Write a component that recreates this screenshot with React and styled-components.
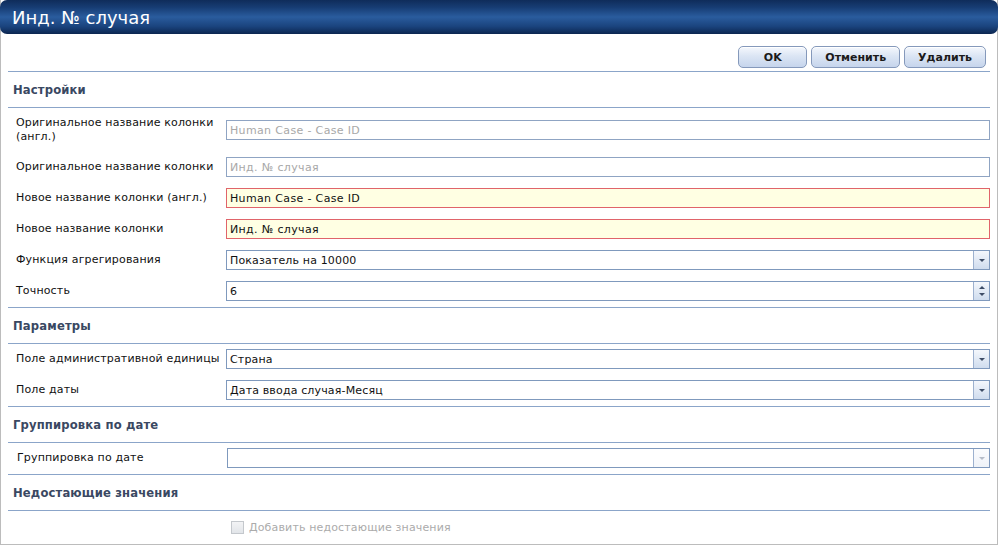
import React from "react"
import styled, { createGlobalStyle } from "styled-components"

const Global = createGlobalStyle`
  html, body {
    margin: 0;
    padding: 0;
    background: #fff;
  }
  body {
    font-family: "DejaVu Sans", Verdana, sans-serif;
    font-size: 11px;
    letter-spacing: 0.15px;
    color: #000;
  }
`

const Window = styled.div`
  width: 996px;
  height: 544px;
  border: 1px solid #bcbcbc;
  border-top: none;
  display: flex;
  flex-direction: column;
`
const TitleBar = styled.div`
  height: 34px;
  margin: 0 -1px;
  border-radius: 7px;
  background: linear-gradient(
    #0f2c5a 0%,
    #173d74 22%,
    #2a5c9e 50%,
    #1a437d 78%,
    #0c2650 100%
  );
  display: flex;
  align-items: center;
  padding-left: 12px;
  color: #fff;
  font-size: 18px;
  letter-spacing: 0;
`
const Body = styled.div`
  padding: 0 7px;
  display: flex;
  flex-direction: column;
`
const Toolbar = styled.div`
  display: flex;
  justify-content: flex-end;
  gap: 4px;
  padding: 12px 4px 3px 0;
`
const Button = styled.button`
  height: 22px;
  min-width: 69px;
  padding: 0 13px;
  border: 1px solid #8599bb;
  border-radius: 5px;
  background: linear-gradient(#f5f8fd 0%, #dbe5f4 45%, #c6d5ec 100%);
  box-shadow: inset 0 1px 0 #fff;
  font-family: "DejaVu Sans", Verdana, sans-serif;
  font-size: 11px;
  font-weight: bold;
  color: #1b1b1b;
`
const Line = styled.div`
  height: 1px;
  background: #8ba5c9;
`
const SectionTitle = styled.div`
  height: 35px;
  display: flex;
  align-items: center;
  padding-left: 5px;
  font-size: 11.6px;
  font-weight: bold;
  color: #3a4862;
`
const Rows = styled.div`
  display: flex;
  flex-direction: column;
  gap: 11px;
  padding: 5px 0 6px 0;
`
const Row = styled.div`
  display: flex;
  align-items: center;
  padding: ${(p) => (p.$tall ? "3px 0 2px" : "0")};
`
const Label = styled.div`
  width: 210px;
  padding-left: ${(p) => (p.$indent ? "9px" : "8px")};
  line-height: 14px;
  color: #111;
`
const Field = styled.div`
  flex: 1;
  height: 18px;
  border: 1px solid ${(p) => (p.$error ? "#e0646a" : "#8fa4c3")};
  background: ${(p) => (p.$error ? "#ffffe3" : "#fff")};
  display: flex;
  align-items: center;
  padding-left: 3px;
  letter-spacing: 0.35px;
  color: ${(p) => (p.$muted ? "#a8a8a8" : "#111")};
`
const Combo = styled.div`
  flex: 1;
  height: 18px;
  border: 1px solid #7f99bd;
  display: flex;
  align-items: stretch;
  background: #fff;
`
const ComboText = styled.div`
  flex: 1;
  display: flex;
  align-items: center;
  padding-left: 3px;
  color: #111;
`
const ComboButton = styled.div`
  width: 15px;
  border-left: 1px solid #9db1cf;
  background: ${(p) =>
    p.$disabled
      ? "linear-gradient(#fbfcfe, #eef2f8)"
      : "linear-gradient(#f4f7fc, #cfdcee)"};
  display: flex;
  flex-direction: column;
  align-items: center;
  justify-content: center;
  gap: 4px;
`
const Arrow = styled.div`
  width: 0;
  height: 0;
  border-left: 3px solid transparent;
  border-right: 3px solid transparent;
  ${(p) =>
    p.$up
      ? `border-bottom: 3px solid ${p.$color};`
      : `border-top: 3px solid ${p.$color};`}
`
const CheckRow = styled.div`
  display: flex;
  align-items: center;
  gap: 5px;
  padding: 10px 0 0 223px;
  color: #ababab;
`
const Box = styled.div`
  width: 11px;
  height: 11px;
  border: 1px solid #c4c8cd;
  background: linear-gradient(#f2f3f5, #e2e5e9);
`

const Select = ({ value, disabled }) => (
  <Combo>
    <ComboText>{value}</ComboText>
    <ComboButton $disabled={disabled}>
      <Arrow $color={disabled ? "#b5bcc8" : "#3d4c66"} />
    </ComboButton>
  </Combo>
)

const Spinner = ({ value }) => (
  <Combo>
    <ComboText>{value}</ComboText>
    <ComboButton>
      <Arrow $up $color="#3d4c66" />
      <Arrow $color="#3d4c66" />
    </ComboButton>
  </Combo>
)

const Section = ({ title }) => (
  <>
    <Line />
    <SectionTitle>{title}</SectionTitle>
    <Line />
  </>
)

export default function App() {
  return (
    <>
      <Global />
      <Window>
        <TitleBar>Инд. № случая</TitleBar>
        <Body>
          <Toolbar>
            <Button>OK</Button>
            <Button>Отменить</Button>
            <Button>Удалить</Button>
          </Toolbar>

          <Section title="Настройки" />
          <Rows>
            <Row $tall>
              <Label>Оригинальное название колонки (англ.)</Label>
              <Field $muted>Human Case - Case ID</Field>
            </Row>
            <Row>
              <Label>Оригинальное название колонки</Label>
              <Field $muted>Инд. № случая</Field>
            </Row>
            <Row>
              <Label>Новое название колонки (англ.)</Label>
              <Field $error>Human Case - Case ID</Field>
            </Row>
            <Row>
              <Label>Новое название колонки</Label>
              <Field $error>Инд. № случая</Field>
            </Row>
            <Row>
              <Label>Функция агрегирования</Label>
              <Select value="Показатель на 10000" />
            </Row>
            <Row>
              <Label>Точность</Label>
              <Spinner value="6" />
            </Row>
          </Rows>

          <Section title="Параметры" />
          <Rows>
            <Row>
              <Label>Поле административной единицы</Label>
              <Select value="Страна" />
            </Row>
            <Row>
              <Label>Поле даты</Label>
              <Select value="Дата ввода случая-Месяц" />
            </Row>
          </Rows>

          <Section title="Группировка по дате" />
          <Rows>
            <Row>
              <Label $indent>Группировка по дате</Label>
              <Select value="" disabled />
            </Row>
          </Rows>

          <Section title="Недостающие значения" />
          <CheckRow>
            <Box />
            <span>Добавить недостающие значения</span>
          </CheckRow>
        </Body>
      </Window>
    </>
  )
}
